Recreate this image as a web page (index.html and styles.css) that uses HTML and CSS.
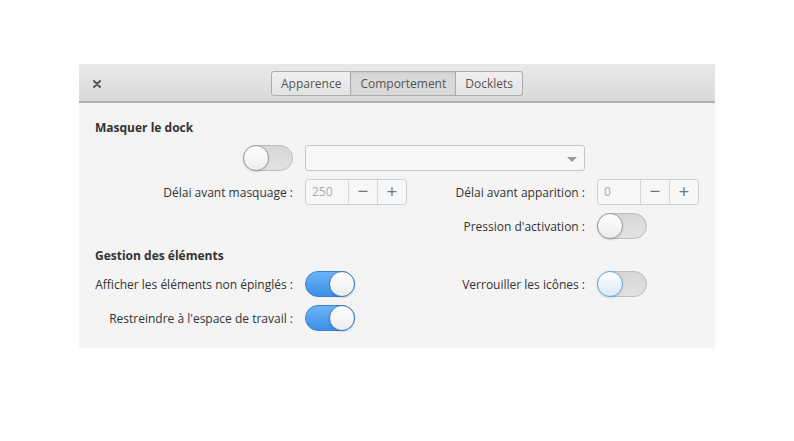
FILE: index.html
```html
<!DOCTYPE html>
<html lang="fr">
<head>
<meta charset="utf-8">
<link rel="stylesheet" href="styles.css">
</head>
<body>
<div class="window">
  <div class="titlebar">
    <span class="close">
      <svg width="10" height="10" viewBox="0 0 10 10"><path d="M2 2 L8 8 M8 2 L2 8" stroke="#555" stroke-width="2" stroke-linecap="round"/></svg>
    </span>
    <div class="tabs">
      <span class="tab">Apparence</span><span class="tab active">Comportement</span><span class="tab">Docklets</span>
    </div>
  </div>
  <div class="content">
    <div class="heading">Masquer le dock</div>
    <div class="grid">
      <div class="lbl"><span class="switch"><span class="knob"></span></span></div>
      <div class="combo span2"><span class="arrow"></span></div>
      <div></div>

      <div class="lbl">Délai avant masquage :</div>
      <div class="spin"><span class="val">250</span><span class="btn">−</span><span class="btn">+</span></div>
      <div class="lbl">Délai avant apparition :</div>
      <div class="spin"><span class="val">0</span><span class="btn">−</span><span class="btn">+</span></div>

      <div></div><div></div>
      <div class="lbl">Pression d'activation :</div>
      <div><span class="switch"><span class="knob"></span></span></div>
    </div>
    <div class="heading second">Gestion des éléments</div>
    <div class="grid">
      <div class="lbl">Afficher les éléments non épinglés :</div>
      <div><span class="switch on"><span class="knob"></span></span></div>
      <div class="lbl">Verrouiller les icônes :</div>
      <div><span class="switch focus"><span class="knob"></span></span></div>

      <div class="lbl">Restreindre à l'espace de travail :</div>
      <div><span class="switch on"><span class="knob"></span></span></div>
      <div></div><div></div>
    </div>
  </div>
</div>
</body>
</html>
```
FILE: styles.css
```css
html, body { margin: 0; padding: 0; background: #fff; }
body { font-family: "Open Sans", "Noto Sans", sans-serif; font-size: 12px; color: #333; }
.window {
  margin: 64px 0 0 79px;
  width: 636px;
  height: 284px;
  background: #f4f4f4;
}
.titlebar {
  height: 37px;
  background: linear-gradient(#e9e9e9, #d9d9d9);
  border-bottom: 2px solid #b0b0b0;
  display: flex;
  align-items: center;
  position: relative;
}
.close { position: absolute; left: 13px; top: 15px; width: 10px; height: 10px; display: flex; }
.tabs { display: flex; margin: 0 auto; padding-top: 1px; }
.tab {
  height: 23px;
  line-height: 23px;
  padding: 0 9px;
  border: 1px solid #ababab;
  border-left: none;
  background: linear-gradient(#f0f0f0, #e3e3e3);
  color: #555;
  font-size: 12px;
}
.tab:first-child { border-left: 1px solid #ababab; border-radius: 3px 0 0 3px; }
.tab:last-child { border-radius: 0 3px 3px 0; }
.tab.active { background: #d9d9d9; box-shadow: inset 0 1px 2px rgba(0,0,0,0.08); }
.content { padding: 16px 16px 0 16px; }
.heading { font-weight: bold; height: 18px; line-height: 18px; margin-bottom: 8px; }
.heading.second { margin-top: 8px; margin-bottom: 6px; }
.grid {
  display: grid;
  grid-template-columns: 198px 102px 166px 102px;
  column-gap: 12px;
  row-gap: 8px;
  grid-auto-rows: 26px;
}
.lbl { display: flex; align-items: center; justify-content: flex-end; white-space: nowrap; }
.span2 { grid-column: span 2; }
.combo {
  border: 1px solid #c8c8c8;
  border-radius: 3px;
  background: #f7f7f7;
  position: relative;
  box-sizing: border-box;
}
.arrow {
  position: absolute; right: 7px; top: 11px;
  width: 0; height: 0;
  border-left: 5px solid transparent; border-right: 5px solid transparent;
  border-top: 5px solid #9a9a9a;
}
.spin {
  display: flex;
  border: 1px solid #cfcfcf;
  border-radius: 3px;
  box-sizing: border-box;
  height: 26px;
  background: #f7f7f7;
}
.spin .val { width: 43px; padding-left: 6px; box-sizing: border-box; line-height: 24px; color: #aaa; }
.spin .btn {
  width: 29px; border-left: 1px solid #d6d6d6; text-align: center; line-height: 23px;
  font-size: 19px; color: #777;
}
.switch {
  display: block;
  position: relative;
  width: 50px; height: 26px; box-sizing: border-box;
  border: 1px solid #bdbdbd;
  border-radius: 13px;
  background: linear-gradient(#d6d6d6, #e2e2e2);
}
.switch .knob {
  position: absolute; left: -1px; top: -1px;
  width: 26px; height: 26px; box-sizing: border-box;
  border-radius: 50%;
  border: 1px solid #9c9c9c;
  background: linear-gradient(#ffffff, #ececec);
  box-shadow: 0 1px 2px rgba(0,0,0,0.15);
}
.switch.on {
  border-color: #3a7fcc;
  background: linear-gradient(#6ab4f8, #3c8ee6);
}
.switch.on .knob { left: auto; right: -1px; border-color: #3f82cf; }
.switch.focus .knob { border-color: #64a8f0; background: linear-gradient(#ffffff, #dce9f7); }
```
